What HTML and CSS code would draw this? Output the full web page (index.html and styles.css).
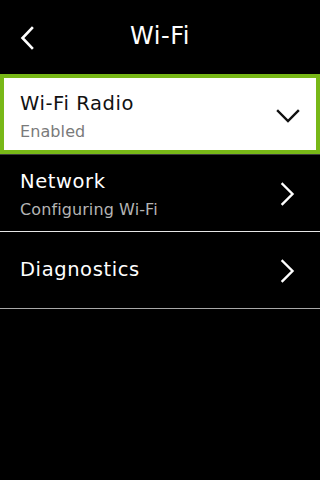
FILE: index.html
```html
<!DOCTYPE html>
<html>
<head>
<meta charset="utf-8">
<link rel="stylesheet" href="styles.css">
</head>
<body>
<div class="screen">
  <header class="header">
    <svg class="back" width="14" height="24" viewBox="0 0 14 24"><path d="M12 2 L2.5 12 L12 22" fill="none" stroke="#fff" stroke-width="2.6" stroke-linecap="square" stroke-linejoin="miter"/></svg>
    <h1 class="title">Wi-Fi</h1>
  </header>
  <ul class="list">
    <li class="item item-first">
      <div class="selected">
        <div class="texts">
          <div class="label">Wi-Fi Radio</div>
          <div class="sub">Enabled</div>
        </div>
        <svg class="chev-down" width="24" height="15" viewBox="0 0 24 15"><path d="M2 2 L12 12 L22 2" fill="none" stroke="#111" stroke-width="2.4" stroke-linecap="square"/></svg>
      </div>
    </li>
    <li class="item">
      <div class="texts texts-two">
        <div class="label">Network</div>
        <div class="sub">Configuring Wi-Fi</div>
      </div>
      <svg class="chev-right" width="15" height="24" viewBox="0 0 15 24"><path d="M2.5 2 L12.5 12 L2.5 22" fill="none" stroke="#fff" stroke-width="2.4" stroke-linecap="square"/></svg>
    </li>
    <li class="item item-last">
      <div class="texts">
        <div class="label">Diagnostics</div>
      </div>
      <svg class="chev-right" width="15" height="24" viewBox="0 0 15 24"><path d="M2.5 2 L12.5 12 L2.5 22" fill="none" stroke="#fff" stroke-width="2.4" stroke-linecap="square"/></svg>
    </li>
  </ul>
</div>
</body>
</html>
```
FILE: styles.css
```css
* { box-sizing: border-box; }
html, body {
  margin: 0;
  padding: 0;
  background: #000;
}
.screen {
  width: 320px;
  height: 480px;
  background: #000;
  color: #fff;
  font-family: "DejaVu Sans", "Liberation Sans", sans-serif;
  overflow: hidden;
}
.header {
  position: relative;
  height: 74px;
  display: flex;
  align-items: center;
  justify-content: center;
}
.back {
  position: absolute;
  left: 20px;
  top: 26px;
}
.title {
  margin: 0;
  font-size: 24px;
  font-weight: normal;
  line-height: 28px;
  padding-bottom: 3px;
  letter-spacing: 0.5px;
}
.list {
  list-style: none;
  margin: 0;
  padding: 0;
}
.item {
  height: 77px;
  border-bottom: 1px solid #e6e6e6;
  display: flex;
  align-items: center;
  padding: 0 25px 0 20px;
}
.item-first {
  height: 81px;
  padding: 0;
  border-bottom: 1px solid #3c3c3c;
  display: block;
}
.item-last {
  border-bottom-color: #a8a8a8;
}
.selected {
  height: 80px;
  background: #fff;
  border: 4px solid #78b817;
  display: flex;
  align-items: center;
  padding: 0 16px 0 16px;
  color: #111;
}
.texts {
  flex: 1;
  display: flex;
  flex-direction: column;
  gap: 7px;
}
.label {
  font-size: 19.5px;
  line-height: 22px;
  letter-spacing: 0.6px;
}
.sub {
  font-size: 16px;
  line-height: 19px;
  color: #b4b4b4;
  letter-spacing: 0.1px;
}
.selected .sub {
  color: #7a7a7a;
}
.selected .texts {
  padding-top: 6px;
}
.texts-two {
  padding-top: 4px;
}
.chev-down {
  margin-top: 4px;
}
.item .texts + .chev-right {
  margin-top: 2px;
}
```
